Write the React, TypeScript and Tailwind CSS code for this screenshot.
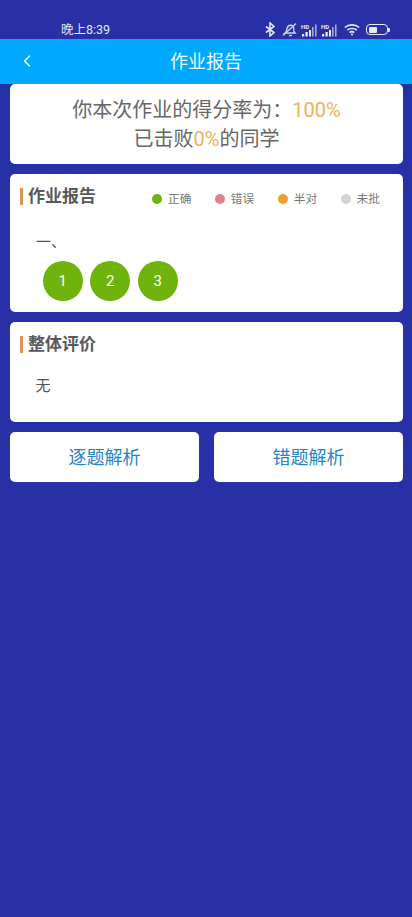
import { ChevronLeft } from "lucide-react";

const FONT = "font-['Roboto','Noto_Sans_CJK_SC',sans-serif]";

function StatusIcons() {
  return (
    <div className="flex items-center">
      <svg width="10" height="15" viewBox="0 0 10 15" fill="none" stroke="#e4e6f2" strokeWidth="1.600">
        <path d="M1 4.500l8 6-4 3.500V1l4 3.500-8 6" />
      </svg>
      <svg className="ml-[7px]" width="16" height="15" viewBox="0 0 16 15" fill="none" stroke="#cfd2e8" strokeWidth="1.400">
        <path d="M3 11c1.500-1 1.500-2.500 2-4.500.5-2 2-3.500 4-3.200 2 .4 3 2 2.700 4-.2 1.500.2 2.600 1.300 3.700H3z" />
        <path d="M1 13.500L14 1.500" />
        <path d="M7 13.500h3" />
      </svg>
      <SignalIcon className="ml-[3px]" />
      <SignalIcon className="ml-[3px]" />
      <svg className="ml-[6px]" width="16" height="13" viewBox="0 0 16 13" fill="none" stroke="#e8eaf5" strokeWidth="1.600">
        <path d="M.8 4.500c4-3.500 10.400-3.500 14.400 0" />
        <path d="M3.200 7c2.500-2 7-2 9.600 0" />
        <path d="M5.600 9.500c1.300-1 3.200-1 4.600 0" />
        <circle cx="8" cy="11.500" r="1" fill="#e8eaf5" stroke="none" />
      </svg>
      <div className="ml-[6px] flex items-center">
        <div className="flex h-[11px] w-[22px] items-center rounded-[4px] border-[1.500px] border-[#e8eaf5] p-[1.500px]">
          <div className="h-full w-[8px] rounded-[1px] bg-[#e8eaf5]" />
        </div>
        <div className="h-[4px] w-[2px] rounded-r-[1px] bg-[#e8eaf5]" />
      </div>
    </div>
  );
}

function SignalIcon({ className }: { className: string }) {
  return (
    <svg className={className} width="17" height="14" viewBox="0 0 17 14" fill="#e8eaf5">
      <text x="0" y="6" fontSize="6" fontWeight="700" fontFamily="Roboto, sans-serif">HD</text>
      <rect x="1" y="11" width="2.200" height="2.500" />
      <rect x="4.500" y="9" width="2.200" height="4.500" />
      <rect x="8" y="7" width="2" height="6.500" />
      <rect x="11" y="4" width="1.600" height="9.500" opacity="0.65" />
      <rect x="14" y="1.500" width="1.600" height="12" opacity="0.65" />
    </svg>
  );
}

function SectionTitle({ children }: { children: string }) {
  return (
    <div className="flex items-center gap-[5px]">
      <div className="h-[17px] w-[3px] bg-[#e0924f]" />
      <span className="text-[17px] leading-[24px] font-bold text-[#5a5a5a]">{children}</span>
    </div>
  );
}

function Legend({ color, label }: { color: string; label: string }) {
  return (
    <div className="flex items-center gap-[6px]">
      <div className={`h-[10px] w-[10px] rounded-full ${color}`} />
      <span className="text-[11.700px] leading-[16px] text-[#777777]">{label}</span>
    </div>
  );
}

export default function App() {
  return (
    <div className={`${FONT} flex min-h-[917px] w-[412px] flex-col bg-[#2830a5]`}>
      <div className="flex h-[39px] items-end justify-between pr-[22px] pb-[2px] pl-[61px]">
        <span className="mb-[-1px] text-[12.500px] leading-[16px] text-[#e4e6f2]">晚上8:39</span>
        <StatusIcons />
      </div>

      <header className="relative flex h-[45px] items-center justify-center bg-[#00a8fe]">
        <ChevronLeft className="absolute top-[12px] left-[17px] text-[#eef9ff]" size={20} strokeWidth={1.800} />
        <span className="text-[18px] text-[#eef9ff]">作业报告</span>
      </header>

      <div className="flex flex-col gap-[10px] pr-[9px] pl-[10px]">
        <section className="flex h-[80px] flex-col items-center justify-center rounded-[5px] bg-white pt-[2px] text-[20px] leading-[29px] text-[#666666]">
          <div>
            你本次作业的得分率为：<span className="text-[#e8b45c]">100%</span>
          </div>
          <div>
            已击败<span className="text-[#e8b45c]">0%</span>的同学
          </div>
        </section>

        <section className="h-[138px] rounded-[5px] bg-white pt-[10px] pl-[10px]">
          <div className="flex items-center justify-between pr-[23px]">
            <SectionTitle>作业报告</SectionTitle>
            <div className="mt-[6px] flex gap-[23.500px]">
              <Legend color="bg-[#6fb30d]" label="正确" />
              <Legend color="bg-[#e5808f]" label="错误" />
              <Legend color="bg-[#f09e2c]" label="半对" />
              <Legend color="bg-[#d3d4d6]" label="未批" />
            </div>
          </div>
          <div className="mt-[22px] pl-[16px] text-[15px] leading-[24px] text-[#555555]">一、</div>
          <div className="mt-[7px] flex gap-[7.500px] pl-[22.700px]">
            {[1, 2, 3].map((n) => (
              <div
                key={n}
                className="flex h-[40px] w-[40px] items-center justify-center rounded-full bg-[#6fb30d] text-[15px] text-white"
              >
                {n}
              </div>
            ))}
          </div>
        </section>

        <section className="h-[100px] rounded-[5px] bg-white pt-[10px] pl-[10px]">
          <SectionTitle>整体评价</SectionTitle>
          <div className="mt-[18px] pl-[15.500px] text-[15px] leading-[24px] text-[#555555]">无</div>
        </section>

        <div className="flex justify-between">
          <button className="h-[50px] w-[189px] rounded-[5px] bg-white text-[18px] text-[#2484c6]">逐题解析</button>
          <button className="h-[50px] w-[189px] rounded-[5px] bg-white text-[18px] text-[#2484c6]">错题解析</button>
        </div>
      </div>
    </div>
  );
}
